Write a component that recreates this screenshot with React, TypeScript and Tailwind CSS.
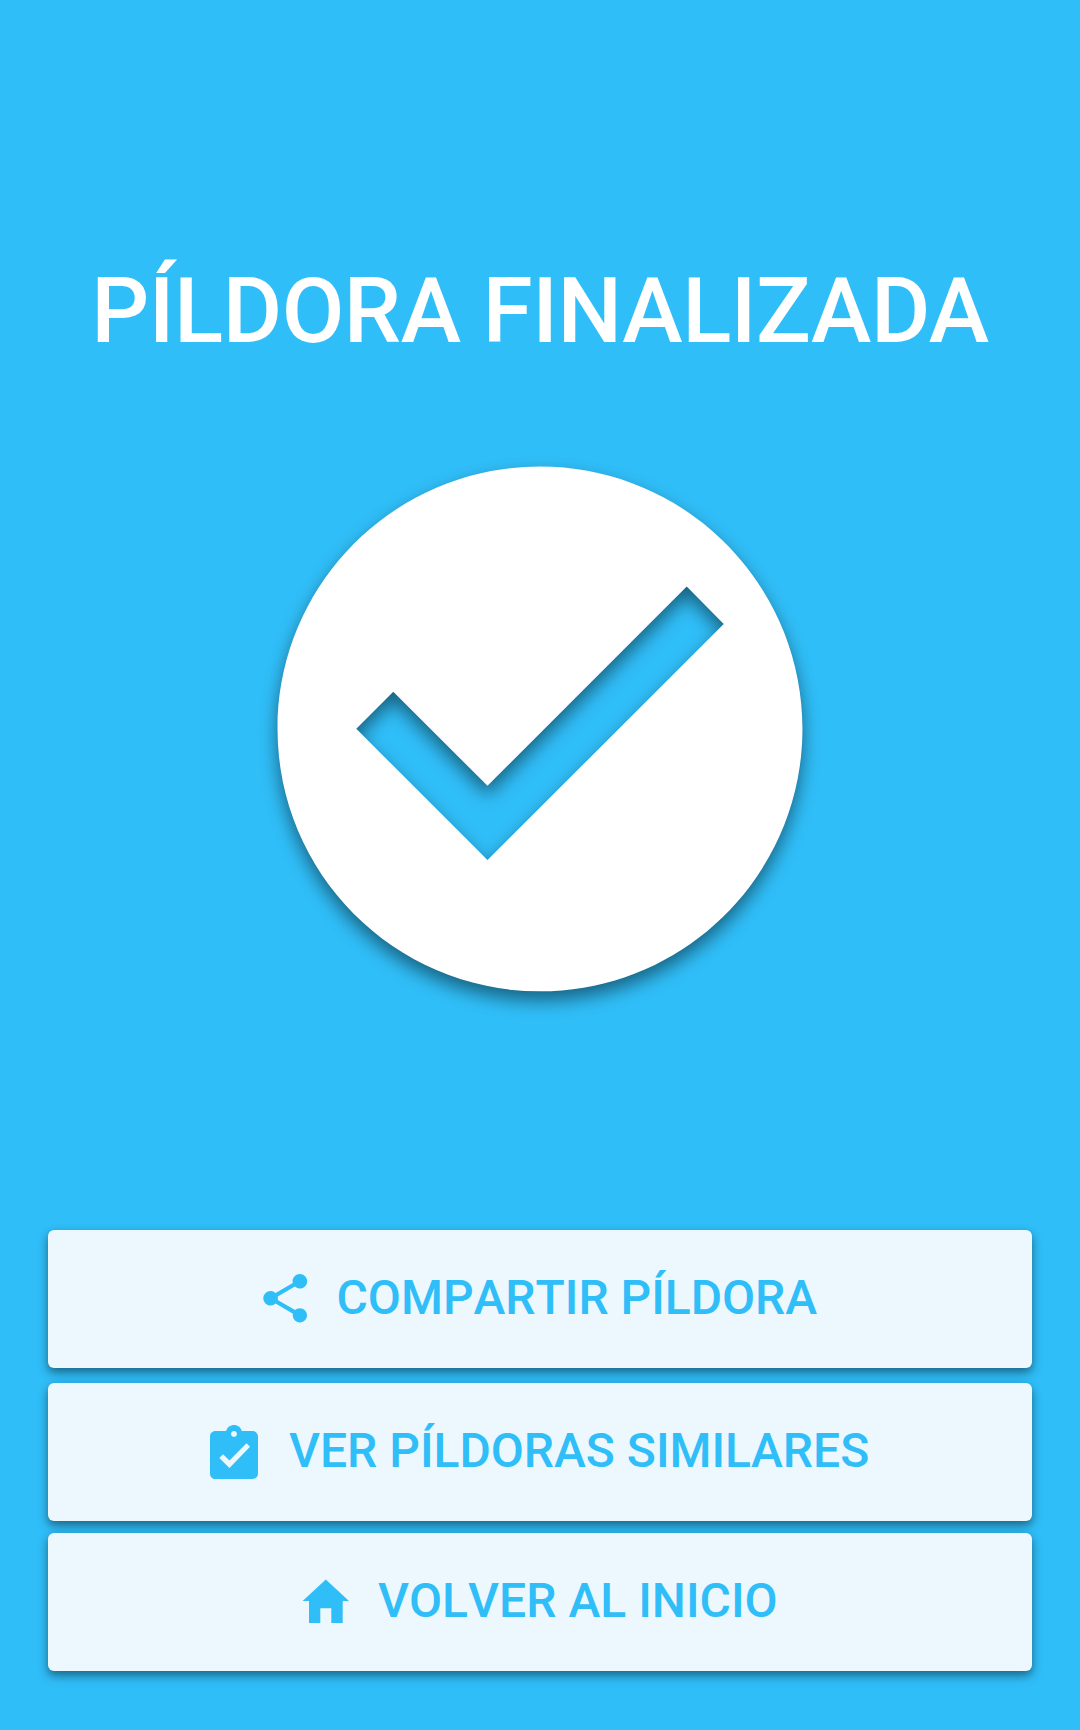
const buttons = [
  {
    label: 'COMPARTIR PÍLDORA',
    row: 'mt-0',
    icon: 'ml-[208px] size-[58.5px] -mt-px',
    text: 'ml-[22px]',
    viewBox: '0 0 24 24',
    path: 'M18 16.08c-.76 0-1.44.3-1.96.77L8.91 12.7c.05-.23.09-.46.09-.7s-.04-.47-.09-.7l7.05-4.11c.54.5 1.25.81 2.04.81 1.66 0 3-1.34 3-3s-1.34-3-3-3-3 1.34-3 3c0 .24.04.47.09.7L8.04 9.81C7.5 9.31 6.79 9 6 9c-1.66 0-3 1.34-3 3s1.34 3 3 3c.79 0 1.5-.31 2.04-.81l7.12 4.16c-.05.21-.08.43-.08.65 0 1.61 1.31 2.92 2.92 2.92s2.92-1.31 2.92-2.92-1.31-2.92-2.92-2.92z',
  },
  {
    label: 'VER PÍLDORAS SIMILARES',
    row: 'mt-[15px]',
    icon: 'ml-[154px] size-[64px] mt-[6px]',
    text: 'ml-[23px]',
    viewBox: '0 0 24 24',
    path: 'M19 3h-4.08C14.6 1.6 13.4.75 12 .75S9.4 1.6 9.08 3H5c-1.1 0-2 .9-2 2v14c0 1.1.9 2 2 2h14c1.1 0 2-.9 2-2V5c0-1.1-.9-2-2-2zm-7 0c.6 0 1.1.5 1.1 1.1s-.5 1.1-1.1 1.1-1.1-.5-1.1-1.1S11.400 3 12 3zM10.300 16.900L6.500 13.100l1.400-1.400 2.400 2.400 6.400-6.500L18 8.900z',
  },
  {
    label: 'VOLVER AL INICIO',
    row: 'mt-[12px]',
    icon: 'ml-[254px] h-[44px] w-[48px] -mt-[3px]',
    text: 'ml-[28px] tracking-[0.03px]',
    viewBox: '0 0 48 44',
    path: 'M23.8.4 47 22h-6.3v22H29.3V29.3H18.3V44H7V22H.6z',
  },
]

export default function App() {
  return (
    <main className="flex h-[1730px] w-[1080px] flex-col items-center bg-[#30bef8] font-['Roboto',sans-serif] font-medium">
      <h1 className="mt-[257px] whitespace-nowrap text-[91px] leading-[109px] tracking-[-0.5px] text-white">PÍLDORA FINALIZADA</h1>
      <svg viewBox="1.98 1.985 20.04 20.04" className="mt-[100px] size-[526px] shrink-0 overflow-visible drop-shadow-[0_9px_9px_rgba(0,0,0,0.48)]">
        <path fill="white" d="M12 2C6.48 2 2 6.48 2 12s4.48 10 10 10 10-4.48 10-10S17.52 2 12 2zm-2 15l-5-5 1.41-1.41L10 14.17l7.59-7.59L19 8l-9 9z" />
      </svg>
      <div className="mt-[238px] flex w-[984px] flex-col">
        {buttons.map((b) => (
          <button key={b.label} className={`flex h-[138px] items-center rounded-[6px] bg-[#ecf8fe] text-[48px] text-[#30bef8] shadow-[0_4px_8px_rgba(0,0,0,0.38),0_6px_14px_rgba(0,0,0,0.12)] [font-kerning:none] ${b.row}`}>
            <svg viewBox={b.viewBox} className={`shrink-0 overflow-visible ${b.icon}`} fill="currentColor" fillRule="evenodd"><path d={b.path} /></svg>
            <span className={`whitespace-nowrap pb-[2px] ${b.text}`}>{b.label}</span>
          </button>
        ))}
      </div>
    </main>
  )
}
